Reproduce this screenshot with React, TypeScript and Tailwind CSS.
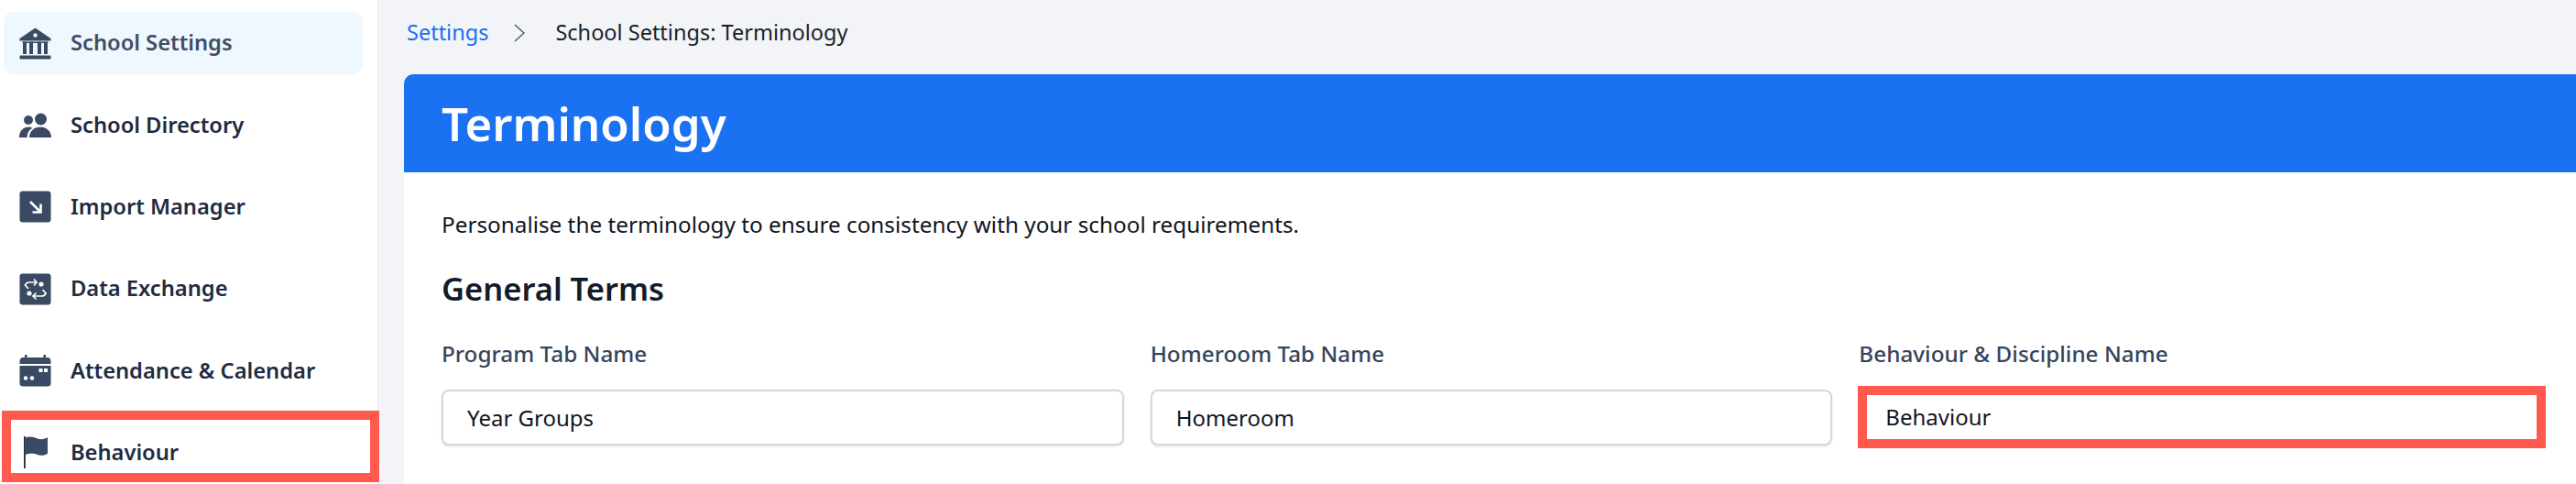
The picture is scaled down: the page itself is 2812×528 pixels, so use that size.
import { ReactNode } from "react";

// Sidebar icons, all drawn on a 35px box
function BankIcon() {
  return (
    <svg width="35" height="35" viewBox="0 0 35 35" fill="#3a4a63">
      <path d="M17.5 0.5 L34.5 12 V14.5 H0.5 V12 Z" />
      <circle cx="17.5" cy="8.5" r="2.2" fill="#eff7ff" />
      <rect x="3.5" y="15.5" width="28" height="1.5" />
      <rect x="4" y="15.5" width="4" height="13.5" />
      <rect x="11" y="15.5" width="4" height="13.5" />
      <rect x="20" y="15.5" width="4" height="13.5" />
      <rect x="27" y="15.5" width="4" height="13.5" />
      <rect x="0.5" y="30.5" width="34" height="4" rx="1" />
    </svg>
  );
}

function UsersIcon() {
  return (
    <svg width="35" height="27" viewBox="0 0 35 27" fill="#3a4a63">
      <circle cx="10" cy="8" r="5" />
      <circle cx="23.5" cy="7" r="6.5" />
      <path d="M0 27 C0 20 4 15.5 10.5 15.5 C12 15.5 13.5 16 14.5 16.5 C10.5 19 8.5 22.5 8.5 27 Z" />
      <path d="M11 27 C11 20 16.5 15.5 23 15.5 C29.5 15.5 35 20 35 27 Z" />
    </svg>
  );
}

function ImportIcon() {
  return (
    <svg width="35" height="35" viewBox="0 0 35 35">
      <rect x="0.5" y="0.5" width="34" height="34" rx="3" fill="#3a4a63" />
      <path d="M12 12 L22.5 22.5 M23.5 14.5 V23.5 H14.5" stroke="#fff" strokeWidth="2.6" fill="none" />
    </svg>
  );
}

function ExchangeIcon() {
  return (
    <svg width="35" height="35" viewBox="0 0 35 35">
      <rect x="0.5" y="0.5" width="34" height="34" rx="3" fill="#3a4a63" />
      <path
        d="M16 6.5 L19 10 L16 13.5 M19 10 H10.5 Q8 10 6.5 13 L10 17 M18.5 21.5 L15 25 L18.5 28.5 M15 25 H25 Q27.5 25 29 22 L25.5 18"
        stroke="#fff"
        strokeWidth="1.7"
        fill="none"
      />
      <circle cx="24" cy="12" r="2.6" fill="#fff" />
      <circle cx="11" cy="22" r="2.6" fill="#fff" />
    </svg>
  );
}

function CalendarIcon() {
  return (
    <svg width="35" height="35" viewBox="0 0 35 35" fill="#3a4a63">
      <rect x="6" y="0" width="2.5" height="5" />
      <rect x="26.5" y="0" width="2.5" height="5" />
      <path d="M0.5 8 Q0.5 3 4 3 H31 Q34.5 3 34.5 8 V10 H0.5 Z" />
      <path d="M0.5 12 H34.5 V31 Q34.5 34.5 31 34.5 H4 Q0.5 34.5 0.5 31 Z" />
      <rect x="21.5" y="15" width="4" height="4" fill="#fff" />
      <rect x="27" y="15" width="4" height="4" fill="#fff" />
      <circle cx="7" cy="25.5" r="2.2" fill="#fff" />
      <circle cx="14" cy="25.5" r="2.2" fill="#fff" />
    </svg>
  );
}

function FlagIcon() {
  return (
    <svg width="35" height="35" viewBox="0 0 35 35" fill="#3a4a63">
      <rect x="5" y="0" width="1.8" height="35" fill="#1f2a3c" />
      <path d="M6.8 1.5 C12 -0.5 16 1 20 2.5 C24 4 28 3 31 1 V19 C27 21 24 21.5 20 20 C16 18.5 12 18 6.8 20 Z" />
    </svg>
  );
}

type NavItem = { label: string; icon: ReactNode; active?: boolean };

const navItems: NavItem[] = [
  { label: "School Settings", icon: <BankIcon />, active: true },
  { label: "School Directory", icon: <UsersIcon /> },
  { label: "Import Manager", icon: <ImportIcon /> },
  { label: "Data Exchange", icon: <ExchangeIcon /> },
  { label: "Attendance & Calendar", icon: <CalendarIcon /> },
  { label: "Behaviour", icon: <FlagIcon /> },
];

function Field({ label, value, highlighted }: { label: string; value: string; highlighted?: boolean }) {
  return (
    <div className="flex-1 min-w-0">
      <div className="h-[30px] text-[24.3px] leading-[30px] font-medium text-[#34445c]">{label}</div>
      <div className="relative mt-[24px]">
        <div className="h-[61px] rounded-[8px] border-2 border-[#d3d8e2] bg-white pl-[26px] flex items-center text-[24px] text-[#10151f] shadow-sm">
          {value}
        </div>
        {highlighted && (
          <div className="absolute -left-[1px] -right-[5px] -top-[4px] h-[68px] border-[10px] border-[#ff5a4d] bg-white pl-[20px] flex items-center text-[24px] text-[#10151f]">
            {value}
          </div>
        )}
      </div>
    </div>
  );
}

export default function App() {
  return (
    <div className="w-[2812px] h-[528px] flex overflow-hidden bg-[#f2f4f8] font-['Noto_Sans',sans-serif]">
      {/* Sidebar */}
      <aside className="relative w-[413px] h-full shrink-0 bg-white border-r border-[#e6e9f0] pt-[13px] pl-[4px] pr-[16px] flex flex-col gap-[21.4px]">
        {navItems.map((item) => (
          <div
            key={item.label}
            className={`h-[68px] shrink-0 flex items-center rounded-[10px] ${item.active ? "bg-[#eff7ff] text-[#3f4e66]" : "text-[#1e2b41]"}`}
          >
            <div className="w-[35px] ml-[17px] flex justify-center">{item.icon}</div>
            <span className="ml-[21px] text-[23.7px] font-semibold whitespace-nowrap">{item.label}</span>
          </div>
        ))}
        <div className="absolute left-[2px] top-[448px] w-[412px] h-[78px] border-[10px] border-[#ff5a4d]" />
      </aside>

      {/* Main content */}
      <main className="flex-1 min-w-0 pl-[28px]">
        <nav className="h-[81px] flex items-center pl-[3px] pb-[9px] text-[23.5px] whitespace-nowrap">
          <span className="text-[#1a6ff0]">Settings</span>
          <svg className="ml-[28px] mr-[33px]" width="12" height="20" viewBox="0 0 12 20" fill="none">
            <path d="M1 1 L11 10 L1 19" stroke="#4a5568" strokeWidth="1.3" />
          </svg>
          <span className="text-[#1a1f29]">School Settings: Terminology</span>
        </nav>
        <section className="h-[447px] bg-white rounded-tl-[10px] overflow-hidden">
          <div className="h-[107px] bg-[#1a71f1] flex items-center pl-[41px]">
            <h1 className="text-[51px] font-semibold text-white">Terminology</h1>
          </div>
          <div className="pl-[41px] pr-[38px]">
            <p className="pt-[42px] text-[24.3px] leading-[30px] text-[#10151f]">
              Personalise the terminology to ensure consistency with your school requirements.
            </p>
            <h2 className="mt-[33px] text-[34.5px] leading-[44px] font-semibold text-[#141c2b]">General Terms</h2>
            <div className="mt-[34px] flex gap-[29px]">
              <Field label="Program Tab Name" value="Year Groups" />
              <Field label="Homeroom Tab Name" value="Homeroom" />
              <Field label="Behaviour & Discipline Name" value="Behaviour" highlighted />
            </div>
          </div>
        </section>
      </main>
    </div>
  );
}
